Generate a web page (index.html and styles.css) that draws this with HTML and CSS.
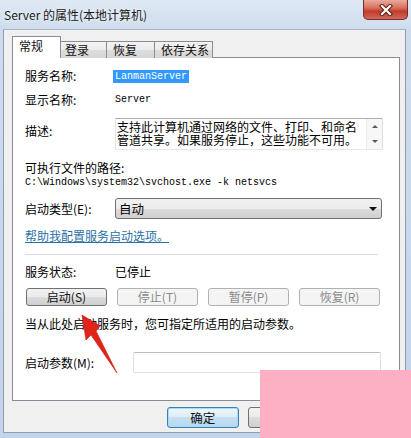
FILE: index.html
```html
<!DOCTYPE html>
<html lang="zh-CN">
	<head>
		<meta charset="UTF-8" />
		<meta name="viewport" content="width=device-width, initial-scale=1.0" />
		<title>Server 的属性(本地计算机)</title>
		<link rel="stylesheet" href="styles.css">
	</head>

	<body>
		<div class="win">
			<div class="titlebar">
				<div class="title">Server 的属性(本地计算机)</div>
				<div class="close">
					<svg width="14" height="12" viewBox="0 0 14 12">
						<path d="M3 2 L11 10 M11 2 L3 10" stroke="#5a1d16" stroke-width="4.2" stroke-linecap="square" fill="none" />
						<path d="M3 2 L11 10 M11 2 L3 10" stroke="#fff" stroke-width="2.2" stroke-linecap="square" fill="none" />
					</svg>
				</div>
			</div>

			<div class="client">
				<div class="tabs">
					<div class="tab active">常规</div>
					<div class="tab t2">登录</div>
					<div class="tab t3">恢复</div>
					<div class="tab t4">依存关系</div>
				</div>

				<div class="panel">
					<div class="row r-name">
						<div class="lbl">服务名称:</div>
						<span class="mono sel">LanmanServer</span>
					</div>
					<div class="row r-disp">
						<div class="lbl">显示名称:</div>
						<span class="mono">Server</span>
					</div>
					<div class="row r-desc">
						<div class="lbl">描述:</div>
						<div class="descbox">
							<div class="desctxt">支持此计算机通过网络的文件、打印、和命名管道共享。如果服务停止，这些功能不可用。</div>
							<div class="vscroll">
								<span class="up"></span>
								<span class="down"></span>
							</div>
						</div>
					</div>
					<div class="row r-pathlbl">可执行文件的路径:</div>
					<div class="row r-path mono">C:\Windows\system32\svchost.exe -k netsvcs</div>
					<div class="row r-type">
						<div class="lbl">启动类型(E):</div>
						<div class="combo">
							<span>自动</span>
							<span class="caret"></span>
						</div>
					</div>
					<div class="row r-link"><a class="link">帮助我配置服务启动选项。</a></div>
					<div class="sep"></div>
					<div class="row r-status">
						<div class="lbl">服务状态:</div>
						<span>已停止</span>
					</div>
					<div class="btns">
						<div class="btn">启动(S)</div>
						<div class="btn off">停止(T)</div>
						<div class="btn off">暂停(P)</div>
						<div class="btn off">恢复(R)</div>
					</div>
					<div class="row r-hint">当从此处启动服务时，您可指定所适用的启动参数。</div>
					<div class="row r-param">
						<div class="lbl wide">启动参数(M):</div>
						<div class="field"></div>
					</div>
				</div>

				<div class="btnbar">
					<div class="btn big default">确定</div>
					<div class="btn big">取消</div>
					<div class="btn big">应用(A)</div>
				</div>
			</div>

			<svg class="arrow" width="411" height="438" viewBox="0 0 411 438">
				<polygon points="82,315 100,326 96,331 117,373 91,335 86,340" fill="#e2231a" stroke="#c01a12" stroke-width="0.6" />
			</svg>
			<div class="mark"></div>
		</div>
	</body>
</html>
```

FILE: styles.css
```css
* {
	box-sizing: border-box;
	margin: 0;
	padding: 0;
}

body {
	width: 411px;
	height: 438px;
	overflow: hidden;
	font-family: "Noto Sans CJK SC", "Noto Sans", sans-serif;
	font-size: 12px;
	color: #000;
}

.win {
	position: relative;
	width: 411px;
	height: 438px;
	background: linear-gradient(#dfe9f5, #cddced 30px, #c2d4ea);
}

.titlebar {
	height: 29px;
	display: flex;
	justify-content: space-between;
	align-items: flex-start;
}

.title {
	padding: 7px 0 0 4px;
	line-height: 16px;
	color: #1b1b1b;
	text-shadow: 0 0 4px #fff;
}

.close {
	width: 45px;
	height: 20px;
	margin-right: 3px;
	border: 1px solid #70302a;
	border-top: none;
	border-radius: 0 0 5px 5px;
	background: linear-gradient(#e9aa9c, #d9725f 40%, #c13d2c 60%, #d4665a);
	display: flex;
	align-items: center;
	justify-content: center;
}

.client {
	margin: 0 5px 0 3px;
	height: 404px;
	border: 1px solid #8e9cad;
	border-top-color: #a9b8c9;
	background: #f0f0f0;
	padding: 6px 5px 0 8px;
}

.tabs {
	display: flex;
	align-items: flex-end;
	height: 22px;
	margin-bottom: -1px;
	position: relative;
	z-index: 1;
}

.tab {
	height: 17px;
	line-height: 16px;
	padding-left: 5px;
	border: 1px solid #898c95;
	border-bottom: none;
	border-left: none;
	background: linear-gradient(#f3f3f3, #ebebeb 50%, #dddddd 50%, #d6d6d6);
	color: #111;
}

.tab.active {
	height: 22px;
	width: 49px;
	padding-top: 1px;
	padding-left: 6px;
	border-left: 1px solid #898c95;
	background: #fff;
}

.t2 {
	width: 46px;
	padding-left: 4px;
}

.t3 {
	width: 48px;
	padding-left: 6px;
}

.t4 {
	width: 58px;
	padding-left: 6px;
}

.panel {
	height: 344px;
	border: 1px solid #898c95;
	background: #fff;
	padding: 10px 17px 0 12px;
}

.row {
	display: flex;
	align-items: center;
	height: 16px;
	line-height: 16px;
}

.lbl {
	width: 90px;
	flex-shrink: 0;
}

.lbl.wide {
	width: 108px;
}

.mono {
	font-family: "Liberation Mono", "DejaVu Sans Mono", monospace;
	font-size: 10px;
}

.sel {
	margin-left: -2px;
	padding: 0 2px;
	line-height: 13px;
	background: #3399ff;
	color: #fff;
}

.r-disp {
	margin-top: 8px;
}

.r-desc {
	margin-top: 10px;
	height: 32px;
	align-items: flex-start;
}

.r-desc .lbl {
	padding-top: 5px;
}

.descbox {
	flex: 1;
	height: 32px;
	display: flex;
	border: 1px solid #abadb3;
	border-right-color: #dbdfe6;
	border-bottom-color: #e3e9ef;
	border-left-color: #e2e3ea;
}

.desctxt {
	width: 250px;
	padding: 1px 0 0 1px;
	line-height: 13px;
	overflow: hidden;
}

.vscroll {
	margin-left: auto;
	width: 16px;
	background: #f7f7f7;
	border-left: 1px solid #ececec;
	position: relative;
}

.up,
.down {
	position: absolute;
	left: 5px;
	width: 0;
	height: 0;
	border-left: 3px solid transparent;
	border-right: 3px solid transparent;
}

.up {
	top: 6px;
	border-bottom: 3px solid #5a5a5a;
}

.down {
	top: 21px;
	border-top: 3px solid #5a5a5a;
}

.r-pathlbl {
	margin-top: 10px;
}

.r-path {
	height: 14px;
	line-height: 14px;
}

.r-type {
	margin-top: 8px;
	height: 21px;
}

.combo {
	flex: 1;
	height: 21px;
	display: flex;
	align-items: center;
	justify-content: space-between;
	padding: 0 4px 0 3px;
	border: 1px solid #707070;
	border-radius: 3px;
	background: linear-gradient(#f2f2f2, #ebebeb 50%, #dddddd 50%, #cfcfcf);
	font-size: 12.5px;
}

.caret {
	width: 0;
	height: 0;
	border-left: 4px solid transparent;
	border-right: 4px solid transparent;
	border-top: 4px solid #111;
}

.r-link {
	margin-top: 9px;
}

.link {
	color: #2b71a8;
	text-decoration: underline;
}

.sep {
	margin: 10px 4px 0 0;
	height: 1px;
	background: #d9dde2;
}

.r-status {
	margin-top: 9px;
}

.btns {
	margin-top: 8px;
	padding: 0 2px 0 1px;
	display: grid;
	grid: 18px / repeat(4, 81px);
	justify-content: space-between;
}

.btn {
	height: 18px;
	line-height: 16px;
	text-align: center;
	border: 1px solid #707070;
	border-radius: 3px;
	background: linear-gradient(#f2f2f2, #ebebeb 50%, #dddddd 50%, #cfcfcf);
	color: #111;
}

.btn.off {
	border-color: #adb2b5;
	background: #f4f4f4;
	color: #8a8a8a;
}

.r-hint {
	margin-top: 10px;
}

.r-param {
	margin-top: 20px;
	height: 21px;
}

.field {
	flex: 1;
	height: 21px;
	margin-right: 1px;
	border: 1px solid #dbdfe6;
	border-top-color: #b9bcc2;
	border-radius: 2px;
}

.btnbar {
	margin-top: 6px;
	padding-left: 155px;
	display: flex;
	gap: 9px;
}

.btn.big {
	width: 72px;
	height: 21px;
	line-height: 19px;
	font-size: 12.5px;
}

.btn.default {
	border-color: #3c7fb1;
	background: linear-gradient(#eef6fb, #dcecf7 50%, #c6e0f2 50%, #b8d8ee);
	box-shadow: inset 0 0 0 1px #a8dbf5;
}

.arrow {
	position: absolute;
	left: 0;
	top: 0;
	pointer-events: none;
}

.mark {
	position: absolute;
	left: 260px;
	top: 370px;
	width: 151px;
	height: 68px;
	background: #fdb0c4;
}
```
